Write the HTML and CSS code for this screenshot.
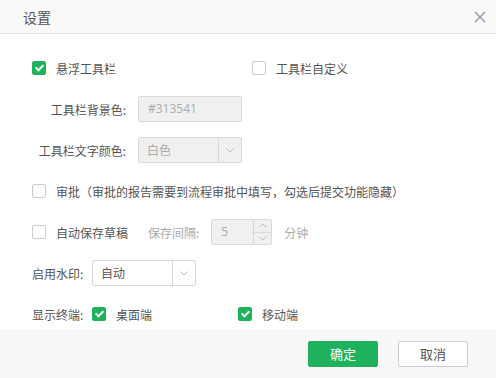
FILE: index.html
```html
<!DOCTYPE html>
<html lang="zh-CN">
<head>
    <meta charset="UTF-8">
    <meta name="viewport" content="width=device-width, initial-scale=1.0">
    <title>设置</title>
    <link rel="stylesheet" href="styles.css">
</head>
<body>
    <div class="dialog">
        <div class="header">
            <span class="title">设置</span>
            <svg class="close" width="12" height="12" viewBox="0 0 12 12">
                <path d="M1 1 L11 11 M11 1 L1 11" stroke="#8495a6" stroke-width="1.2" fill="none"/>
            </svg>
        </div>

        <div class="content">
            <div class="row">
                <label class="check half">
                    <span class="box checked"></span>
                    <span>悬浮工具栏</span>
                </label>
                <label class="check">
                    <span class="box"></span>
                    <span>工具栏自定义</span>
                </label>
            </div>

            <div class="row">
                <span class="label">工具栏背景色:</span>
                <div class="input disabled">#313541</div>
            </div>

            <div class="row">
                <span class="label">工具栏文字颜色:</span>
                <div class="select disabled">
                    <span class="value">白色</span>
                    <span class="arrow"><svg width="8" height="5" viewBox="0 0 8 5"><path d="M0.5 0.5 L4 4 L7.5 0.5" stroke="#bbb" fill="none"/></svg></span>
                </div>
            </div>

            <div class="row">
                <label class="check">
                    <span class="box"></span>
                    <span>审批（审批的报告需要到流程审批中填写，勾选后提交功能隐藏）</span>
                </label>
            </div>

            <div class="row">
                <label class="check">
                    <span class="box"></span>
                    <span>自动保存草稿</span>
                </label>
                <span class="muted gap-left">保存间隔:</span>
                <div class="spinner disabled">
                    <span class="value">5</span>
                    <span class="steps">
                        <span class="step"><svg width="8" height="5" viewBox="0 0 8 5"><path d="M0.5 4.5 L4 1 L7.5 4.5" stroke="#bbb" fill="none"/></svg></span>
                        <span class="step"><svg width="8" height="5" viewBox="0 0 8 5"><path d="M0.5 0.5 L4 4 L7.5 0.5" stroke="#bbb" fill="none"/></svg></span>
                    </span>
                </div>
                <span class="muted unit">分钟</span>
            </div>

            <div class="row">
                <span class="short-label">启用水印:</span>
                <div class="select">
                    <span class="value">自动</span>
                    <span class="arrow"><svg width="8" height="5" viewBox="0 0 8 5"><path d="M0.5 0.5 L4 4 L7.5 0.5" stroke="#bbb" fill="none"/></svg></span>
                </div>
            </div>

            <div class="row">
                <span class="short-label">显示终端:</span>
                <label class="check device">
                    <span class="box checked"></span>
                    <span>桌面端</span>
                </label>
                <label class="check">
                    <span class="box checked"></span>
                    <span>移动端</span>
                </label>
            </div>
        </div>

        <div class="footer">
            <button class="btn primary">确定</button>
            <button class="btn">取消</button>
        </div>
    </div>
</body>
</html>
```

FILE: styles.css
```css
body {
    margin: 0;
    font-family: "Noto Sans CJK SC", "Noto Sans", sans-serif;
    font-size: 12px;
    color: #555;
    background: #fff;
}

.dialog {
    width: 496px;
    height: 378px;
    display: flex;
    flex-direction: column;
}

.header {
    flex-shrink: 0;
    height: 33px;
    background: #f9f9f9;
    border-bottom: 1px solid #e6e6e6;
    display: flex;
    align-items: center;
    justify-content: space-between;
    padding: 0 10px 0 23px;
}

.title {
    font-size: 14px;
    color: #555;
}

.close {
    display: block;
}

.content {
    flex: 1;
    min-height: 0;
    padding: 21px 32px 0 32px;
}

.row {
    height: 26px;
    display: flex;
    align-items: center;
    margin-bottom: 15px;
}

.row:last-child {
    margin-bottom: 0;
}

.check {
    display: flex;
    align-items: center;
    color: #555;
}

.half {
    width: 220px;
}

.device {
    width: 146px;
}

.box {
    width: 12px;
    height: 12px;
    border: 1px solid #ccc;
    border-radius: 2px;
    background: #fff;
    margin-right: 10px;
    position: relative;
}

.box.checked {
    background: #1fb25c;
    border-color: #1fb25c;
}

.box.checked::after {
    content: "";
    position: absolute;
    left: 3.5px;
    top: 1px;
    width: 3px;
    height: 6px;
    border: solid #fff;
    border-width: 0 2px 2px 0;
    transform: rotate(45deg);
}

.label {
    width: 94px;
    text-align: right;
    margin-right: 12px;
    color: #555;
}

.short-label {
    width: 60px;
    color: #555;
}

.input {
    width: 104px;
    height: 26px;
    box-sizing: border-box;
    line-height: 24px;
    padding: 0 9px;
    border: 1px solid #d9d9d9;
    border-radius: 2px;
    color: #aaa;
    font-family: "Open Sans", "Noto Sans CJK SC", sans-serif;
}

.disabled {
    background: #f0f0f0;
}

.select {
    width: 104px;
    height: 26px;
    border: 1px solid #d9d9d9;
    border-radius: 2px;
    display: flex;
    align-items: stretch;
    box-sizing: border-box;
}

.select .value {
    flex: 1;
    padding-left: 8px;
    line-height: 24px;
    color: #555;
}

.select.disabled .value {
    color: #aaa;
}

.arrow {
    width: 22px;
    border-left: 1px solid #d9d9d9;
    display: flex;
    align-items: center;
    justify-content: center;
}

.muted {
    color: #aaa;
}

.gap-left {
    margin-left: 20px;
    margin-right: 12px;
}

.unit {
    margin-left: 12px;
}

.spinner {
    width: 61px;
    height: 26px;
    box-sizing: border-box;
    border: 1px solid #d9d9d9;
    border-radius: 2px;
    display: flex;
}

.spinner .value {
    flex: 1;
    padding-left: 9px;
    line-height: 24px;
    color: #aaa;
    font-family: "Open Sans", sans-serif;
}

.steps {
    width: 17px;
    border-left: 1px solid #d9d9d9;
    display: flex;
    flex-direction: column;
}

.step {
    flex: 1;
    display: flex;
    align-items: center;
    justify-content: center;
}

.step + .step {
    border-top: 1px solid #d9d9d9;
}

.footer {
    flex-shrink: 0;
    height: 49px;
    background: #f8f8f8;
    display: flex;
    align-items: center;
    justify-content: flex-end;
    padding-right: 28px;
}

.btn {
    width: 70px;
    height: 26px;
    margin-left: 20px;
    border: 1px solid #ccc;
    border-radius: 2px;
    background: #fff;
    color: #555;
    font-family: "Noto Sans CJK SC", sans-serif;
    font-size: 13px;
    padding: 0;
}

.btn.primary {
    background: #1fb25c;
    border-color: #1fb25c;
    color: #fff;
}
```
